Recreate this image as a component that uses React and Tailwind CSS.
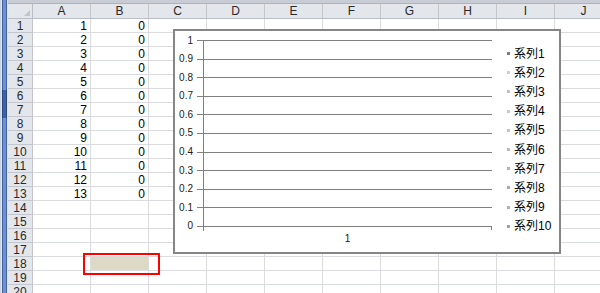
import React from 'react';

const COLS = ['A', 'B', 'C', 'D', 'E', 'F', 'G', 'H', 'I', 'J'];
const ROWS = Array.from({ length: 20 }, (_, i) => i + 1);
const TICKS = ['1', '0.9', '0.8', '0.7', '0.6', '0.5', '0.4', '0.3', '0.2', '0.1', '0'];
const MARKERS = ['#7a7a8a', '#cfcfcf', '#c2c2c2', '#cacaca', '#c4c4c4', '#bbbbbb', '#b3b3b3', '#a9a9a9', '#b0b0b0', '#a3a3a3'];

const font = { fontFamily: '"Liberation Sans", "Noto Sans CJK JP", sans-serif' };

const cellValue = (row, col) => {
  if (row > 13) return '';
  if (col === 'A') return row;
  if (col === 'B') return 0;
  return '';
};

const Chart = () => (
  <div className="absolute left-[173px] top-[29px] w-[388px] h-[225px] border-2 border-[#868686] bg-white flex items-start pt-[9px]">
    <div className="flex flex-col">
      <div className="relative flex flex-col justify-between h-[187px]">
        {TICKS.map((t) => (
          <div key={t} className="flex items-center h-px">
            <span className="w-[22px] pr-[4px] text-right text-[10px] leading-none text-[#1a1a1a]">{t}</span>
            <div className="w-[6px] h-px bg-[#808080]" />
            <div className="w-[289px] h-px bg-[#808080]" />
          </div>
        ))}
        <div className="absolute left-[28px] top-0 w-px h-[191px] bg-[#808080]" />
        <div className="absolute left-[316px] top-[186px] w-px h-[4px] bg-[#808080]" />
      </div>
      <div className="ml-[28px] w-[289px] mt-[7px] text-center text-[10px] leading-none text-[#1a1a1a]">1</div>
    </div>
    <div className="ml-[15px] mt-[4px] flex flex-col">
      {MARKERS.map((c, i) => (
        <div key={i} className="flex items-center h-[19.2px] gap-[4px]">
          <div className="w-[3px] h-[3px]" style={{ backgroundColor: c }} />
          <span className="text-[12px] leading-none text-black">系列{i + 1}</span>
        </div>
      ))}
    </div>
  </div>
);

export default function App() {
  return (
    <div className="relative w-[600px] h-[293px] overflow-hidden bg-white flex" style={font}>
      {/* left window edge */}
      <div className="w-[8px] h-full flex flex-col border-l border-[#c9d3e2] bg-[#dfe6f0]">
        <div className="h-[90px] mx-[1px] bg-[#6f92cc] border-x border-[#3f63a6]" />
        <div className="h-[28px] mx-[1px] bg-[#3d63a8] border-x border-[#2a4a88]" />
        <div className="flex-1 mx-[1px] bg-[#6f92cc] border-x border-[#3f63a6]" />
      </div>

      <div className="flex-1 flex flex-col min-w-0">
        <div className="h-[4px] shrink-0 bg-[#c8cdd5] border-b border-[#aeb4bd]" />

        {/* column headers */}
        <div className="flex h-[15px] shrink-0 bg-[#e3e6eb] border-b border-[#b9bec6]">
          <div className="relative w-[25px] shrink-0 border-r border-[#b9bec6]">
            <div className="absolute right-[2px] bottom-[2px] w-0 h-0 border-l-[6px] border-l-transparent border-b-[6px] border-b-[#c2c6cc]" />
          </div>
          {COLS.map((c) => (
            <div key={c} className="w-[58px] shrink-0 border-r border-[#c3c7cd] flex items-center justify-center text-[12px] leading-none text-[#2a2a2a]">
              {c}
            </div>
          ))}
        </div>

        {/* rows */}
        {ROWS.map((r) => (
          <div key={r} className="flex h-[14px] shrink-0">
            <div className="w-[25px] shrink-0 bg-[#e3e6eb] border-r border-b border-[#c3c7cd] flex items-center justify-center text-[12px] leading-none text-[#2a2a2a]">
              {r}
            </div>
            {COLS.map((c) => (
              <div
                key={c}
                className={`w-[58px] shrink-0 border-r border-b border-[#dadcdf] flex items-center justify-end pr-[3px] text-[12px] leading-none text-black ${r === 18 && c === 'B' ? 'bg-[#ddd9c4]' : ''}`}
              >
                {cellValue(r, c)}
              </div>
            ))}
          </div>
        ))}
      </div>

      <Chart />

      {/* selection outline */}
      <div className="absolute left-[83px] top-[253px] w-[77px] h-[22px] border-2 border-[#ff0000]" />
    </div>
  );
}
